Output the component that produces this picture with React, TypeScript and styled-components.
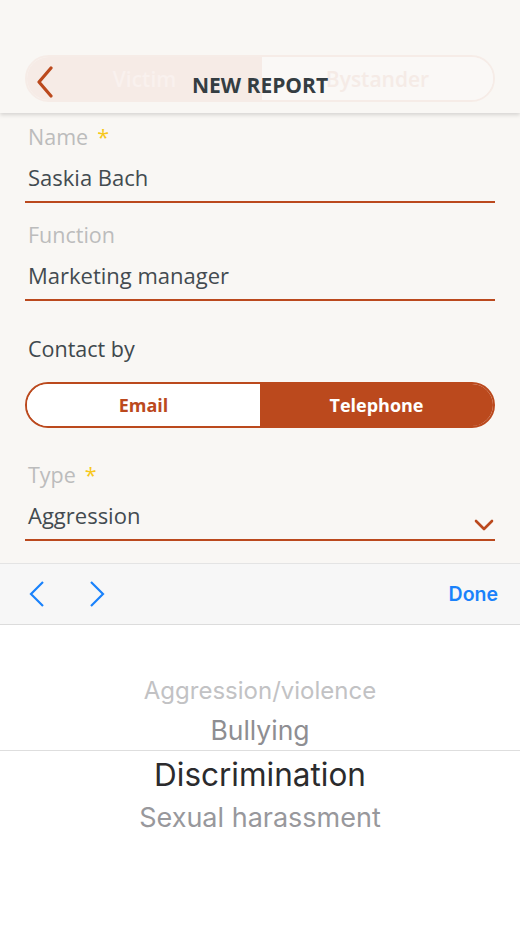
import * as React from 'react';
import styled, { createGlobalStyle } from 'styled-components';

const accent = '#bb491d';

const GlobalStyle = createGlobalStyle`
    html, body {
        margin: 0;
        padding: 0;
        background: #f9f7f4;
    }
    body {
        font-family: 'Open Sans', 'Noto Sans', sans-serif;
    }
`;

const Screen = styled.div`
    width: 520px;
    height: 925px;
    display: flex;
    flex-direction: column;
    background: #f9f7f4;
    overflow: hidden;
`;

const Header = styled.header`
    height: 113px;
    box-sizing: border-box;
    padding: 55px 25px 0;
    display: grid;
    background: #f9f7f4;
    box-shadow: 0 2px 4px rgba(0, 0, 0, 0.14);
    position: relative;
    z-index: 1;
`;

const GhostSwitch = styled.div`
    grid-area: 1 / 1;
    height: 47px;
    display: grid;
    grid-template-columns: 235px 1fr;
    border-radius: 24px;
    overflow: hidden;
    border: 2px solid #f6ece7;
    box-sizing: border-box;
`;

const GhostOption = styled.div<{ active?: boolean }>`
    display: flex;
    align-items: center;
    justify-content: center;
    font-size: 21px;
    font-weight: 600;
    background: ${(p) => (p.active ? '#f6ebe6' : '#faf8f6')};
    color: ${(p) => (p.active ? '#f9f1ee' : '#f5ebe6')};
`;

const NavBar = styled.div`
    grid-area: 1 / 1;
    display: grid;
    grid-template-columns: 1fr auto 1fr;
    align-items: center;
    height: 47px;
    padding-top: 12px;
    box-sizing: border-box;
`;

const BackButton = styled.div`
    display: flex;
    align-items: center;
    padding-left: 10px;
    margin-top: -6px;
`;

const Title = styled.h1`
    margin: 0;
    font-size: 21px;
    font-weight: 700;
    color: #343d42;
`;

const Form = styled.div`
    padding: 10px 25px 0;
    display: flex;
    flex-direction: column;
`;

const Field = styled.div<{ spaced?: boolean }>`
    display: flex;
    flex-direction: column;
    margin-top: ${(p) => (p.spaced ? '18px' : '0')};
`;

const Label = styled.div<{ dark?: boolean }>`
    font-size: 21.5px;
    line-height: 28px;
    padding-left: 3px;
    color: ${(p) => (p.dark ? '#3f484d' : '#bcbcbc')};
`;

const Required = styled.span`
    color: #f7c81c;
    margin-left: 9px;
`;

const Value = styled.div`
    margin-top: 11px;
    font-size: 22px;
    line-height: 30px;
    padding: 0 3px 9px;
    color: #434b50;
    border-bottom: 2px solid ${accent};
    display: flex;
    align-items: center;
    justify-content: space-between;
`;

const ContactLabel = styled(Label)`
    margin-top: 34px;
`;

const Segmented = styled.div`
    margin-top: 19px;
    height: 46px;
    display: grid;
    grid-template-columns: 1fr 1fr;
    border: 2px solid ${accent};
    border-radius: 23px;
    overflow: hidden;
    box-sizing: border-box;
`;

const SegOption = styled.div<{ active?: boolean }>`
    display: flex;
    align-items: center;
    justify-content: center;
    font-size: 18px;
    font-weight: 700;
    background: ${(p) => (p.active ? accent : '#ffffff')};
    color: ${(p) => (p.active ? '#ffffff' : accent)};
`;

const TypeField = styled(Field)`
    margin-top: 33px;
`;

const Chevron = styled.svg`
    margin: 10px -2px -10px 0;
`;

const Toolbar = styled.div`
    margin-top: 22px;
    height: 62px;
    box-sizing: border-box;
    background: #f7f7f7;
    border-top: 1px solid #e4e4e4;
    border-bottom: 1px solid #dcdcdc;
    display: flex;
    align-items: center;
    padding: 0 22px 0 28px;
`;

const Arrows = styled.div`
    display: flex;
    gap: 42px;
    flex: 1;
`;

const Done = styled.div`
    font-family: Inter, 'Liberation Sans', sans-serif;
    font-size: 19.5px;
    font-weight: 600;
    color: #1a82fb;
`;

const Picker = styled.div`
    flex: 1;
    background: #ffffff;
    padding-top: 45px;
    display: flex;
    flex-direction: column;
    font-family: Inter, 'Liberation Sans', sans-serif;
`;

const PickerItem = styled.div<{ size: number; color: string; h: number; selected?: boolean }>`
    height: ${(p) => p.h}px;
    display: flex;
    align-items: center;
    justify-content: center;
    font-size: ${(p) => p.size}px;
    color: ${(p) => p.color};
    border-top: ${(p) => (p.selected ? '1px solid #dedede' : 'none')};
`;

const ArrowIcon: React.FC<{ dir: 'left' | 'right' }> = ({ dir }) => (
    <svg width="18" height="28" viewBox="0 0 18 28">
        <path
            d={dir === 'left' ? 'M15 2 L3 14 L15 26' : 'M3 2 L15 14 L3 26'}
            fill="none"
            stroke="#1a82fb"
            strokeWidth="2.2"
        />
    </svg>
);

export default function App() {
    return (
        <Screen>
            <GlobalStyle />
            <Header>
                <GhostSwitch>
                    <GhostOption active>Victim</GhostOption>
                    <GhostOption>Bystander</GhostOption>
                </GhostSwitch>
                <NavBar>
                    <BackButton>
                        <svg width="20" height="32" viewBox="0 0 20 32">
                            <path d="M16 2 L4 16 L16 30" fill="none" stroke={accent} strokeWidth="3.2" strokeLinecap="round" strokeLinejoin="round" />
                        </svg>
                    </BackButton>
                    <Title>NEW REPORT</Title>
                    <div />
                </NavBar>
            </Header>

            <Form>
                <Field>
                    <Label>
                        Name<Required>*</Required>
                    </Label>
                    <Value>Saskia Bach</Value>
                </Field>
                <Field spaced>
                    <Label>Function</Label>
                    <Value>Marketing manager</Value>
                </Field>

                <ContactLabel dark>Contact by</ContactLabel>
                <Segmented>
                    <SegOption>Email</SegOption>
                    <SegOption active>Telephone</SegOption>
                </Segmented>

                <TypeField>
                    <Label>
                        Type<Required>*</Required>
                    </Label>
                    <Value>
                        Aggression
                        <Chevron width="20" height="14" viewBox="0 0 20 14">
                            <path d="M2 3 L10 11 L18 3" fill="none" stroke={accent} strokeWidth="2.6" strokeLinecap="round" strokeLinejoin="round" />
                        </Chevron>
                    </Value>
                </TypeField>
            </Form>

            <Toolbar>
                <Arrows>
                    <ArrowIcon dir="left" />
                    <ArrowIcon dir="right" />
                </Arrows>
                <Done>Done</Done>
            </Toolbar>

            <Picker>
                <PickerItem h={40} size={24} color="#c2c2c4">Aggression/violence</PickerItem>
                <PickerItem h={40} size={26.5} color="#8e8e92">Bullying</PickerItem>
                <PickerItem h={46} size={31.5} color="#2b2b2d" selected>Discrimination</PickerItem>
                <PickerItem h={40} size={27} color="#98989c">Sexual harassment</PickerItem>
            </Picker>
        </Screen>
    );
}
